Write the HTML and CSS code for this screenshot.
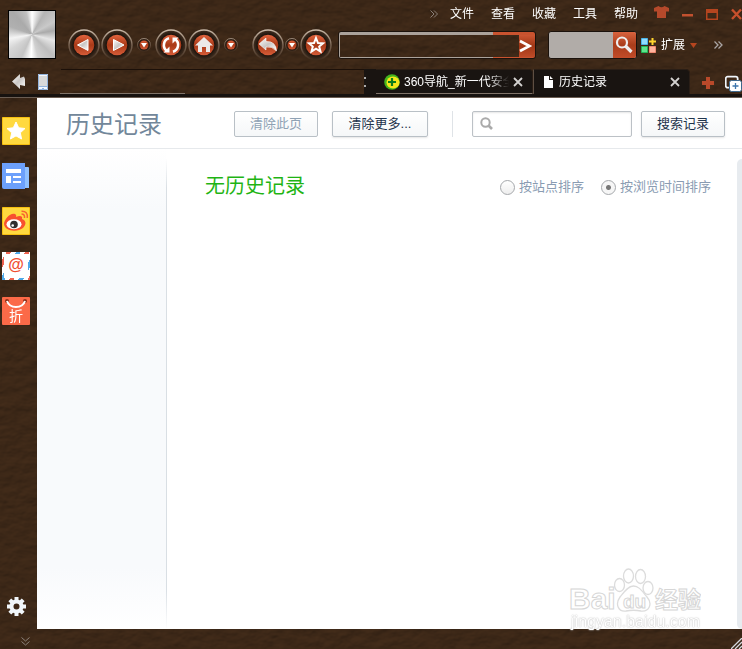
FILE: index.html
```html
<!DOCTYPE html>
<html lang="zh-CN">
<head>
  <meta charset="UTF-8">
  <meta name="viewport" content="width=device-width, initial-scale=1.0">
  <title>历史记录</title>
  <link rel="stylesheet" href="styles.css">
</head>
<body>
  <!-- leather skin behind the whole window -->
  <svg class="leather" aria-hidden="true">
    <filter id="leather" x="0" y="0" width="100%" height="100%" color-interpolation-filters="sRGB">
      <feTurbulence type="fractalNoise" baseFrequency="0.07 0.1" numOctaves="3" seed="8"/>
      <feDiffuseLighting surfaceScale="1" diffuseConstant="1" lighting-color="#462e1b">
        <feDistantLight azimuth="250" elevation="60"/>
      </feDiffuseLighting>
    </filter>
    <rect width="100%" height="100%" filter="url(#leather)"/>
  </svg>

  <!-- shared gradients -->
  <svg class="defs" aria-hidden="true">
    <defs>
      <linearGradient id="ring" x1="0" y1="0" x2="0" y2="1">
        <stop offset="0" stop-color="#c9b9a8"/>
        <stop offset="0.5" stop-color="#7a6554"/>
        <stop offset="1" stop-color="#3f2b1b"/>
      </linearGradient>
      <radialGradient id="well">
        <stop offset="0.6" stop-color="#120b06"/>
        <stop offset="1" stop-color="#453122"/>
      </radialGradient>
      <linearGradient id="orange" x1="0" y1="0" x2="0" y2="1">
        <stop offset="0" stop-color="#e2643e"/>
        <stop offset="0.5" stop-color="#a93a18"/>
        <stop offset="1" stop-color="#d65c38"/>
      </linearGradient>
      <linearGradient id="silver" x1="0" y1="0" x2="1" y2="1">
        <stop offset="0" stop-color="#ffffff"/>
        <stop offset="0.5" stop-color="#c9c6c4"/>
        <stop offset="1" stop-color="#ffffff"/>
      </linearGradient>
      <symbol id="disc" viewBox="0 0 32 32">
        <circle cx="16" cy="16" r="15" fill="url(#well)" stroke="url(#ring)" stroke-width="1.4"/>
        <circle cx="16" cy="16" r="10.3" fill="url(#orange)"/>
      </symbol>
    </defs>
  </svg>

  <header class="chrome">
    <div class="skin-logo"></div>
    <div class="chrome-main">
      <div class="menubar">
        <span class="more">
          <svg width="8" height="8" viewBox="0 0 8 8"><path d="M.5.5 4 4 .5 7.5M4 .5 7.500 4 4 7.500" fill="none" stroke="#8a8079"/></svg>
        </span>
        <nav class="menu">
          <button type="button">文件</button>
          <button type="button">查看</button>
          <button type="button">收藏</button>
          <button type="button">工具</button>
          <button type="button">帮助</button>
        </nav>
        <div class="window-buttons">
          <button type="button" aria-label="皮肤"><svg width="15" height="16" viewBox="0 0 15 16"><path d="M0 2 4.500 0Q7.500 2.500 10.500 0L15 2V5.500H12V12H3V5.500H0Z" fill="#b5492b"/></svg></button>
          <button type="button" aria-label="最小化"><svg width="11" height="12" viewBox="0 0 11 12"><path d="M0 6H11V8.500H0Z" fill="#c2512f"/></svg></button>
          <button type="button" aria-label="最大化"><svg width="12" height="12" viewBox="0 0 12 12"><path d="M0 1H12V12H0ZM1.500 5V10.500H10.500V5Z" fill="#b5451f" fill-rule="evenodd"/></svg></button>
          <button type="button" aria-label="关闭"><svg width="11" height="12" viewBox="0 0 11 12"><path d="M1 1.500 10 11M10 1.500 1 11" stroke="#c8502c" stroke-width="2.400"/></svg></button>
        </div>
      </div>

      <div class="toolbar">
        <div class="nav-buttons">
          <button type="button" aria-label="后退"><svg width="32" height="32"><use href="#disc"/><path d="M9.500 16 20 10.500V21.500Z" fill="url(#silver)" stroke="#fff"/></svg></button>
          <button type="button" aria-label="前进"><svg width="32" height="32"><use href="#disc"/><path d="M23 16 12.500 10.500V21.500Z" fill="url(#silver)" stroke="#fff"/></svg></button>
          <button type="button" class="drop" aria-label="更多"><svg width="14" height="14"><use href="#disc"/><path d="M4 5H10L7 9.500Z" fill="#fff"/></svg></button>
          <button type="button" aria-label="刷新"><svg width="32" height="32"><use href="#disc"/><path d="M14 9.300A7 7 0 0 0 11.500 21.500M18 22.700A7 7 0 0 0 20.500 10.500" fill="none" stroke="#fff" stroke-width="2.600"/><path d="M8.500 23.500H14.500V17.500ZM23.500 8.500H17.500V14.500Z" fill="#fff"/></svg></button>
          <button type="button" aria-label="主页"><svg width="32" height="32"><use href="#disc"/><path d="M16 8 25 16.500H22V23H18V18H14V23H10V16.500H7Z" fill="#ece9e7"/></svg></button>
          <button type="button" class="drop" aria-label="更多"><svg width="14" height="14"><use href="#disc"/><path d="M4 5H10L7 9.500Z" fill="#fff"/></svg></button>
        </div>
        <div class="nav-buttons">
          <button type="button" aria-label="恢复"><svg width="32" height="32"><use href="#disc"/><path d="M7 15 14 9V12.500Q24 12 24.500 22 20 17 14 18V21Z" fill="url(#silver)" stroke="#fff" stroke-width=".6"/></svg></button>
          <button type="button" class="drop" aria-label="更多"><svg width="14" height="14"><use href="#disc"/><path d="M4 5H10L7 9.500Z" fill="#fff"/></svg></button>
          <button type="button" aria-label="收藏"><svg width="32" height="32"><use href="#disc"/><path d="M16 9 18 14 23 14.300 19.200 17.500 20.500 22.500 16 19.700 11.500 22.500 12.800 17.500 9 14.300 14 14Z" fill="none" stroke="#fff" stroke-width="2"/></svg></button>
        </div>
        <form class="address">
          <input type="text" aria-label="地址">
          <button type="button" aria-label="转到"><svg width="16" height="16" viewBox="0 0 16 16"><path d="M1 3 10.500 8 1 13" fill="none" stroke="#fff" stroke-width="2.600"/></svg></button>
        </form>
        <form class="quick-search">
          <input type="text" aria-label="搜索">
          <button type="button" aria-label="搜索"><svg width="20" height="20" viewBox="0 0 20 20"><circle cx="8" cy="7.500" r="5" fill="none" stroke="#eee" stroke-width="2.200"/><path d="M11.500 11 17.500 17" stroke="#eee" stroke-width="3.200"/></svg></button>
        </form>
        <button type="button" class="extend">
          <svg width="15" height="15" viewBox="0 0 15 15"><path d="M.5.500H6.500V6.500H.5Z" fill="#8fdcff" stroke="#4bb5e8"/><path d="M.5 8.500H6.500V14.500H.5Z" fill="#5fe38b" stroke="#22b859"/><path d="M8.500 8.500H14.500V14.500H8.500Z" fill="#ffb39d" stroke="#f08a72"/><path d="M11.500 0V7M8 3.500H15" stroke="#ffd52e" stroke-width="2"/></svg>
          <span>扩展</span>
          <svg width="7" height="5" viewBox="0 0 7 5"><path d="M0 0H7L3.500 5Z" fill="#b5451f"/></svg>
        </button>
        <span class="more">
          <svg width="9" height="8" viewBox="0 0 9 8"><path d="M.5.500 4 4 .5 7.500M4.500.500 8 4 4.500 7.500" fill="none" stroke="#aaa5a5" stroke-width="1.300"/></svg>
        </span>
      </div>
    </div>
  </header>

  <div class="tabbar">
    <div class="tab-tools">
      <svg width="14" height="15" viewBox="0 0 14 15"><path d="M0 7.500 8 0V4L12 2.500 13 5V12L8 11V15Z" fill="url(#silver)"/></svg>
      <svg width="10" height="16" viewBox="0 0 10 16"><path d="M0 0H10V16H0Z" fill="#f4f8ff"/><path d="M.5.500H9.500V15.500H.5Z" fill="none" stroke="#94b4dc"/><path d="M1 2H9V12H1Z" fill="#d9d9d9"/><path d="M1 12.500H9M4 14.500H6" stroke="#94b4dc"/></svg>
      <span class="seam"></span>
    </div>
    <div class="tabs">
      <div class="tab-rest"><svg width="3" height="10" viewBox="0 0 3 10"><path d="M0 1H2M0 9H2" fill="none" stroke="#ddd" stroke-width="1.500"/></svg></div>
      <div class="tab">
        <svg width="16" height="16" viewBox="0 0 16 16"><circle cx="8" cy="8" r="7.800" fill="#43b51d"/><ellipse cx="9" cy="8.500" rx="6.500" ry="6" fill="#f4e51b"/><path d="M8 4V12M4 8H12" stroke="#0a7a1b" stroke-width="2.200"/></svg>
        <span class="tab-title">360导航_新一代安全</span>
        <button type="button" aria-label="关闭标签"><svg width="10" height="10" viewBox="0 0 10 10"><path d="M1 1 9 9M9 1 1 9" stroke="#d4d2d0" stroke-width="1.800"/></svg></button>
      </div>
      <div class="tab active">
        <svg width="9" height="12" viewBox="0 0 9 12"><path d="M0 0H5V4H9V12H0ZM6 0 9 3H6Z" fill="#fff"/></svg>
        <span class="tab-title">历史记录</span>
        <button type="button" aria-label="关闭标签"><svg width="10" height="10" viewBox="0 0 10 10"><path d="M1 1 9 9M9 1 1 9" stroke="#d4d2d0" stroke-width="1.800"/></svg></button>
      </div>
    </div>
    <div class="tab-actions">
      <button type="button" aria-label="新建标签"><svg width="12" height="12" viewBox="0 0 12 12"><path d="M4 0H8V4H12V8H8V12H4V8H0V4H4Z" fill="#b9492a"/></svg></button>
      <button type="button" aria-label="多标签"><svg width="17" height="17" viewBox="0 0 17 17"><rect x=".7" y="1.700" width="12" height="11" rx="2" fill="none" stroke="#f1f6fb" stroke-width="1.800"/><rect x="4.500" y="5.500" width="12" height="11" rx="2" fill="#fff" stroke="#3d688e"/><path d="M10.500 8V14M7.500 11H13.500" stroke="#3d75ac" stroke-width="1.300"/></svg></button>
    </div>
  </div>

  <div class="workspace">
    <aside class="sidebar">
      <a href="#" aria-label="收藏夹"><svg width="28" height="28" viewBox="0 0 28 28"><path d="M.5.500H27.500V27.500H.5Z" fill="#ffd93f" stroke="#f6bf10"/><path d="M14 5 16.700 10.800 23 11.500 18.300 15.800 19.600 22 14 18.900 8.400 22 9.700 15.800 5 11.500 11.300 10.800Z" fill="#fff" stroke="#fff" stroke-linejoin="round"/></svg></a>
      <a href="#" aria-label="新闻"><svg width="28" height="28" viewBox="0 0 28 28"><path d="M22 5H26Q27 5 27 6V26H20Z" fill="#8fc0ff"/><path d="M0 1H23V27H2Q0 27 0 25Z" fill="#6ca0fb"/><path d="M4 7H19V11H4ZM4 14H9V21H4ZM11 14H19V16H11ZM11 19H19V21H11Z" fill="#fff"/></svg></a>
      <a href="#" aria-label="微博"><svg width="28" height="28" viewBox="0 0 28 28"><path d="M.5.500H27.500V27.500H.5Z" fill="#ffd93f" stroke="#f6bf10"/><path d="M2 17C2 12 9 5 13 7 15 8 14 10 14 10 18 8 21 9 20 12 25 14 24 18 21 21 16 25 3 25 2 17Z" fill="#f8512f"/><ellipse cx="12" cy="17.300" rx="7.500" ry="5" fill="#fff"/><circle cx="12" cy="17.500" r="3.800" fill="#303030"/><circle cx="10.700" cy="18.500" r="1.300" fill="#fff"/><path d="M19.500 7Q23 7 22.500 11M19.500 4.300Q26 4 25.300 11" fill="none" stroke="#f8642f" stroke-width="1.500"/></svg></a>
      <a href="#" class="mail" aria-label="邮箱"><span>@</span></a>
      <a href="#" class="deal" aria-label="折扣"><svg width="28" height="12" viewBox="0 0 28 12"><circle cx="5" cy="4" r="2" fill="#8d301c"/><circle cx="23" cy="4" r="2" fill="#8d301c"/><path d="M5 4Q7 10 14 10T23 4" fill="none" stroke="#fff" stroke-width="2"/></svg><span>折</span></a>
      <button type="button" class="settings" aria-label="设置"><svg width="19" height="19" viewBox="0 0 19 19"><circle cx="9.500" cy="9.500" r="5" fill="none" stroke="#f1f6fa" stroke-width="4"/><path d="M9.500 0V4M9.500 15V19M0 9.500H4M15 9.500H19M2.800 2.800 5.500 5.500M13.500 13.500 16.200 16.200M2.800 16.200 5.500 13.500M13.500 5.500 16.200 2.800" stroke="#f1f6fa" stroke-width="4"/></svg></button>
    </aside>

    <main class="page">
      <div class="page-head">
        <h1>历史记录</h1>
        <div class="clear-actions">
          <button type="button" class="btn" disabled>清除此页</button>
          <button type="button" class="btn btn-more">清除更多...</button>
        </div>
        <form class="history-search">
          <div class="field">
            <svg width="13" height="13" viewBox="0 0 13 13"><circle cx="5.500" cy="5.500" r="4.200" fill="none" stroke="#aaa" stroke-width="2"/><path d="M8.500 8.500 12 12" stroke="#aaa" stroke-width="2.600"/></svg>
            <input type="text" aria-label="搜索历史记录">
          </div>
          <button type="button" class="btn">搜索记录</button>
        </form>
      </div>

      <div class="page-body">
        <div class="dates"></div>
        <section class="results">
          <h2>无历史记录</h2>
          <div class="sort">
            <label><input type="radio" name="sort" value="site">按站点排序</label>
            <label><input type="radio" name="sort" value="time" checked>按浏览时间排序</label>
          </div>
        </section>
        <div class="scrollbar"></div>
      </div>

      <svg class="watermark" width="136" height="68" viewBox="0 0 136 68">
        <g fill="#fff" stroke="#dcdcdc" stroke-width="1.300">
          <ellipse cx="54.500" cy="38" rx="5" ry="6.500"/>
          <ellipse cx="63.500" cy="29" rx="5" ry="7"/>
          <ellipse cx="75.500" cy="29.500" rx="5" ry="7"/>
          <ellipse cx="83" cy="41" rx="5" ry="6.500"/>
          <path d="M68.500 39C74 39 77 44 82 50 88 57 84 65 76 64 71 63 66 63 61 64 53 65 50 57 55 50 59 45 63 39 68.500 39Z"/>
        </g>
        <g class="wm-outline">
          <text x="4" y="62" class="wm-brand">Bai</text>
          <text x="58" y="61" class="wm-du">du</text>
          <text x="90" y="61" class="wm-cn">经验</text>
        </g>
      </svg>
      <div class="watermark-url">jingyan.baidu.com</div>
    </main>
  </div>

  <footer class="statusbar">
    <svg width="9" height="9" viewBox="0 0 9 9"><path d="M.5.500 4.500 4 8.500.500M.5 4.500 4.500 8 8.500 4.500" fill="none" stroke="#8a8079"/></svg>
    <svg class="grip" width="11" height="11" viewBox="0 0 11 11"><path d="M0 11 11 0M4 11 11 4M8 11 11 8" stroke="#d5d9df" stroke-width="1.300"/></svg>
  </footer>
</body>
</html>
```
FILE: styles.css
```css
* {
  box-sizing: border-box;
}

body {
  margin: 0;
  min-height: 100vh;
  display: flex;
  flex-direction: column;
  background-color: #3a2718;
  font-family: "Liberation Sans", "Noto Sans CJK SC", sans-serif;
  font-size: 12px;
  line-height: 18px;
  color: #fff;
}

svg {
  display: block;
  flex: none;
}

button {
  padding: 0;
  border: 0;
  background: none;
  color: inherit;
  font: inherit;
}

input {
  min-width: 0;
  padding: 0;
  border: 0;
  background: none;
  font: inherit;
}

.leather {
  position: fixed;
  top: 0;
  left: 0;
  width: 100%;
  height: 100%;
  z-index: -1;
}

.defs {
  position: absolute;
  width: 0;
  height: 0;
}

/* top of the window */
.chrome {
  display: flex;
  gap: 12px;
  height: 69px;
  padding-left: 8px;
}

.skin-logo {
  width: 48px;
  height: 49px;
  margin-top: 10px;
  flex: none;
  border: 1px solid #000;
  background: conic-gradient(#fff, #b4b4b4 30deg, #c9c9c9 60deg, #aaa 80deg, #e6e6e6 105deg, #bdbdbd 135deg, #d0d0d0 165deg, #fff 182deg, #c4c4c4 205deg, #d5d5d5 235deg, #f4f4f4 260deg, #b0b0b0 290deg, #aaa 320deg, #c0c0c0 345deg, #fff);
}

.chrome-main {
  flex: 1;
  min-width: 0;
}

.menubar {
  display: flex;
  align-items: center;
  justify-content: flex-end;
  height: 28px;
}

.menu {
  display: flex;
  gap: 17px;
  margin: 0 16px 0 12px;
}

.window-buttons {
  display: flex;
  gap: 13px;
  height: 20px;
}

.toolbar {
  display: flex;
  align-items: center;
  height: 34px;
}

.nav-buttons {
  display: flex;
  align-items: center;
  gap: 1px;
  margin-right: 11px;
}

.nav-buttons + .nav-buttons {
  margin-right: 6px;
}

.nav-buttons .drop {
  margin: 0 3px;
}

.nav-buttons + .nav-buttons .drop {
  margin: 0;
}

.address,
.quick-search {
  display: flex;
  height: 28px;
  border: 1px solid #1b120c;
  border-radius: 3px;
  overflow: hidden;
}

.address {
  flex: 1;
  margin-right: 12px;
  padding: 3px 0 1px 1px;
  --rail: linear-gradient(90deg, #aaa29b calc(100% - 42px), #c9532f calc(100% - 42px));
  background: var(--rail) top / 100% 3px no-repeat, var(--rail) bottom / 100% 1px no-repeat, linear-gradient(#aaa29b, #aaa29b) left / 1px 100% no-repeat;
}

.address input {
  flex: 1;
  color: #fff;
}

.address button {
  display: flex;
  align-items: center;
  width: 16px;
  background: linear-gradient(#cd5632, #a03716 50%, #bf4b28);
}

.quick-search {
  width: 89px;
  background-color: #b1aca8;
}

.quick-search input {
  flex: 1;
}

.quick-search button {
  display: flex;
  align-items: center;
  justify-content: center;
  width: 23px;
  background: linear-gradient(#d9633e, #a93d1b 50%, #c24c29);
}

.extend {
  display: flex;
  align-items: center;
  gap: 5px;
  margin: 0 17px 0 4px;
}

.toolbar .more {
  margin-right: 19px;
}

/* tabs */
.tabbar {
  display: flex;
  height: 29px;
  border-bottom: 1px solid #6b5d52;
  box-shadow: inset 0 -3px #17120f;
  padding-bottom: 3px;
}

.tab-tools {
  position: relative;
  display: flex;
  align-items: center;
  gap: 12px;
  flex: 1;
  padding-left: 12px;
}

.tab-tools::before {
  content: "";
  position: absolute;
  top: 0;
  left: 61px;
  right: 0;
  height: 1px;
  background-color: #1c1009;
}

.seam {
  align-self: flex-end;
  width: 125px;
  height: 1px;
  background-color: #80746a;
}

.tabs {
  display: flex;
}

.tab-rest {
  display: flex;
  align-items: center;
  width: 12px;
  background-color: #191411;
}

.tab {
  display: flex;
  align-items: center;
  gap: 4px;
  width: 157px;
  padding: 0 9px 0 8px;
  border: 1px solid #2a1e16;
  border-bottom: 1px solid #80746a;
  border-left: 0;
  border-top-right-radius: 4px;
  background-color: #191411;
}

.tab.active {
  gap: 6px;
  padding-left: 10px;
  border-left: 1px solid #5e4f43;
  border-bottom: 0;
}

.tab-title {
  flex: 1;
  overflow: hidden;
  white-space: nowrap;
  mask-image: linear-gradient(90deg, #000 calc(100% - 20px), transparent);
}

.tab-actions {
  display: flex;
  align-items: center;
  gap: 11px;
  padding: 3px 0 0 12px;
}

/* sidebar and page */
.workspace {
  display: flex;
  flex: 1;
}

.sidebar {
  display: flex;
  flex-direction: column;
  gap: 17px;
  width: 37px;
  flex: none;
  padding: 19px 0 13px 2px;
}

.sidebar a {
  width: 28px;
  height: 28px;
  text-decoration: none;
}

.mail {
  padding: 2px;
  background: repeating-linear-gradient(120deg, #fff 0 4px, #ee6350 4px 8px, #fff 8px 12px, #4fa9e8 12px 16px);
}

.mail span {
  display: block;
  height: 24px;
  background-color: #fff;
  color: #f04e30;
  font-size: 16px;
  font-weight: bold;
  line-height: 22px;
  text-align: center;
}

.deal {
  background-color: #fb6a48;
  border-radius: 1px;
}

.deal span {
  display: block;
  color: #fff;
  font-size: 14px;
  line-height: 14px;
  text-align: center;
}

.settings {
  margin: auto 0 0 5px;
}

.page {
  position: relative;
  display: flex;
  flex-direction: column;
  flex: 1;
  min-width: 0;
  background-color: #fff;
  color: #8a9cb2;
  font-size: 13px;
}

.page-head {
  display: flex;
  align-items: center;
  height: 51px;
  padding: 1px 17px 0 29px;
  border-bottom: 1px solid #e6e9ec;
}

h1,
h2 {
  margin: 0;
  font-weight: normal;
}

h1 {
  padding-top: 3px;
  color: #72879a;
  font-size: 24px;
  line-height: 36px;
}

.clear-actions {
  display: flex;
  gap: 14px;
  margin-left: auto;
  padding-right: 24px;
}

.btn {
  width: 84px;
  height: 26px;
  border: 1px solid #b9c0c6;
  border-radius: 2px;
  background: linear-gradient(#fff, #f5f7f8);
  box-shadow: 0 1px 2px rgba(0, 0, 0, 0.1);
  color: #1f344c;
  white-space: nowrap;
}

.btn:disabled {
  color: #8fa2b4;
  box-shadow: none;
}

.btn-more {
  width: 96px;
}

.history-search {
  display: flex;
  gap: 9px;
  padding-left: 19px;
  border-left: 1px solid #dfe3e7;
}

.field {
  display: flex;
  align-items: center;
  gap: 6px;
  width: 160px;
  height: 26px;
  padding: 0 7px;
  border: 1px solid #bcc1c6;
  border-radius: 2px;
  box-shadow: inset 0 1px 2px rgba(0, 0, 0, 0.1);
}

.field input {
  flex: 1;
}

.page-body {
  display: flex;
  flex: 1;
}

.dates {
  width: 130px;
  flex: none;
  border-right: 1px solid;
  border-image: linear-gradient(#fff 10px, #d9dfe4 40px, #d9dfe4 calc(100% - 40px), #fff) 1;
  background: linear-gradient(#fff, #f8fafc 60px, #f8fafc calc(100% - 60px), #fff);
}

.results {
  display: flex;
  align-items: flex-start;
  justify-content: space-between;
  flex: 1;
  padding: 22px 26px 0 38px;
}

h2 {
  color: #1fb414;
  font-size: 20px;
  line-height: 30px;
}

.sort {
  display: flex;
  gap: 17px;
  line-height: 32px;
}

.sort label {
  display: flex;
  align-items: center;
  gap: 4px;
}

.sort input {
  appearance: none;
  width: 15px;
  height: 15px;
  margin: 0;
  border: 1px solid #a5a8ab;
  border-radius: 50%;
  background: linear-gradient(#fff, #eee);
}

.sort input:checked {
  background: radial-gradient(circle, #777 2px, #f6f6f6 3px);
}

.scrollbar {
  width: 5px;
  margin-top: 10px;
  border-radius: 5px 0 0 5px;
  background-color: #e7ebef;
}

/* watermark over the lower right corner */
.watermark {
  position: absolute;
  right: 41px;
  bottom: 14px;
}

.wm-outline {
  fill: #fff;
  stroke: #d6d6d6;
  stroke-width: 1px;
  font-weight: bold;
}

.wm-brand {
  font-size: 30px;
}

.wm-du {
  font-size: 19px;
}

.wm-cn {
  font-size: 23px;
}

.watermark-url {
  position: absolute;
  right: 42px;
  bottom: -3px;
  color: #fff;
  font-size: 16px;
  line-height: 20px;
  text-shadow: 0 0 1px #bbb, 0 0 2px #ccc;
}

.statusbar {
  display: flex;
  align-items: center;
  justify-content: space-between;
  height: 20px;
  padding: 4px 0 0 21px;
}

.grip {
  align-self: flex-end;
}
```
